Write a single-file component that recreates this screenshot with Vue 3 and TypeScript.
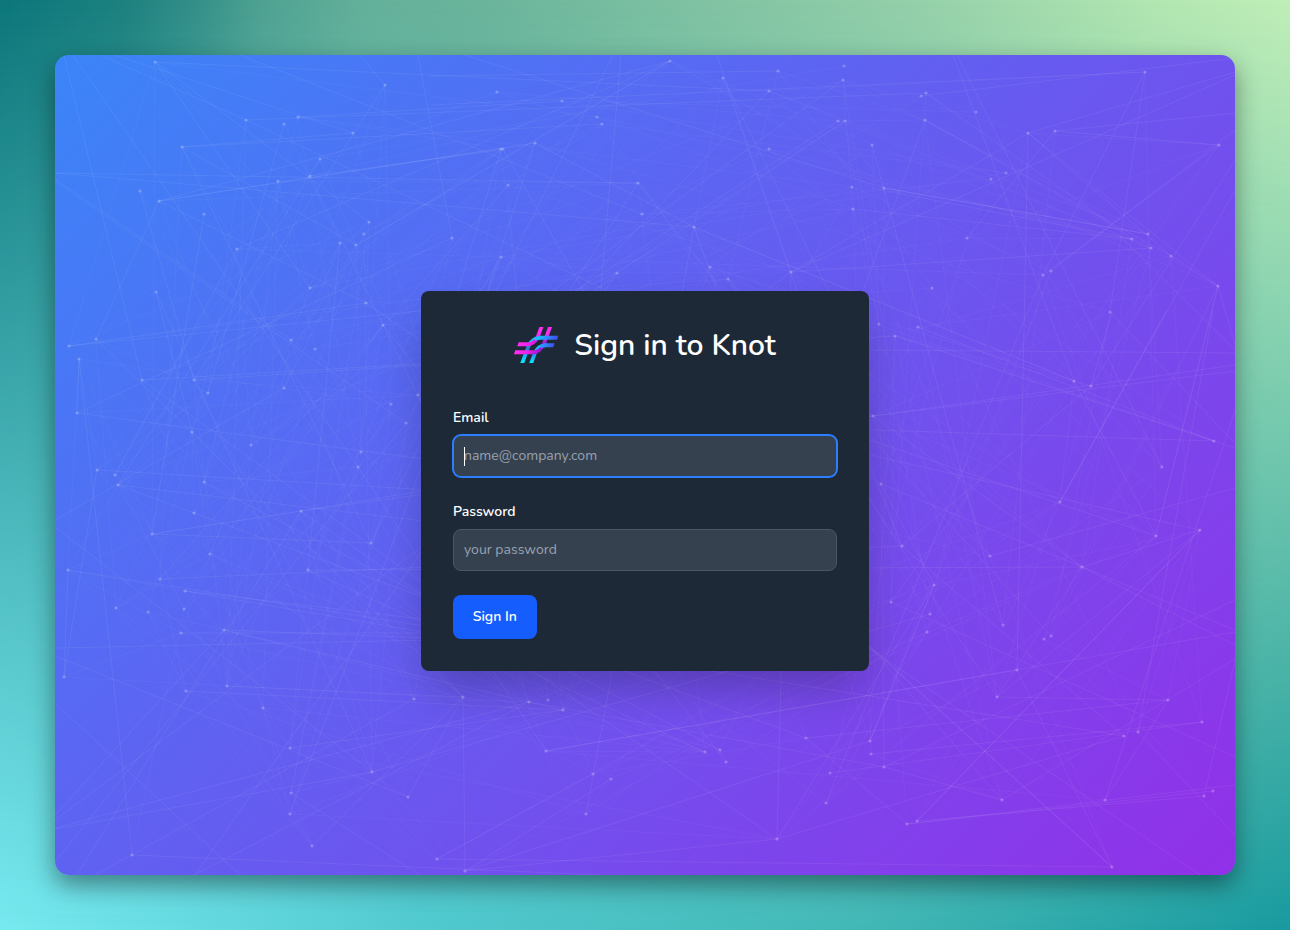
<script setup lang="ts">
import { ref } from 'vue'

type Point = [number, number]
type Segment = [number, number, number, number]

const email = ref('')
const password = ref('')

const dots: Point[] = [
  [155, 62], [385, 85], [246, 120], [298, 117], [284, 124], [353, 133], [182, 147], [320, 159], [310, 176],
  [278, 181], [140, 191], [159, 201], [204, 214], [369, 222], [364, 234], [340, 243], [356, 245], [237, 249],
  [156, 292], [310, 288], [366, 303], [497, 92], [562, 101], [597, 117], [602, 124], [501, 149], [503, 149],
  [535, 143], [508, 185], [452, 238], [501, 257], [617, 273], [638, 183], [642, 214], [694, 227], [710, 267],
  [728, 279], [791, 272], [670, 61], [723, 78], [778, 71], [769, 91], [769, 149], [844, 66], [843, 80],
  [838, 121], [845, 121], [852, 187], [853, 209], [921, 96], [926, 93], [925, 120], [976, 112], [872, 145],
  [884, 188], [1028, 133], [1055, 131], [1145, 72], [1219, 145], [991, 179], [1006, 173], [967, 238],
  [932, 288], [1051, 271], [1043, 275], [1132, 239], [1148, 234], [1151, 248], [1171, 256], [1218, 286],
  [96, 339], [69, 346], [79, 359], [142, 380], [194, 380], [208, 393], [284, 388], [291, 340], [315, 349],
  [383, 325], [77, 413], [192, 432], [251, 445], [97, 470], [115, 475], [118, 485], [204, 482], [194, 513],
  [301, 511], [152, 534], [210, 554], [68, 570], [160, 579], [185, 591], [116, 608], [148, 612], [184, 609],
  [308, 570], [371, 543], [358, 467], [361, 452], [391, 404], [406, 423], [418, 395], [879, 324], [895, 336],
  [918, 327], [873, 416], [881, 484], [902, 546], [934, 585], [891, 602], [930, 614], [990, 556], [1082, 567],
  [1156, 536], [1200, 530], [1060, 502], [1214, 441], [1162, 467], [1074, 381], [1091, 386], [1110, 312],
  [64, 677], [181, 633], [224, 630], [186, 691], [227, 686], [263, 708], [290, 748], [291, 793], [290, 814],
  [312, 846], [132, 855], [372, 772], [408, 797], [414, 699], [463, 697], [529, 702], [548, 700], [563, 710],
  [546, 751], [593, 774], [611, 779], [586, 814], [437, 859], [465, 871], [705, 752], [720, 750], [726, 762],
  [806, 738], [830, 773], [826, 803], [777, 839], [927, 632], [1003, 625], [1044, 639], [1051, 636],
  [1017, 670], [997, 697], [1168, 700], [1202, 722], [1124, 736], [1138, 732], [870, 741], [871, 754],
  [884, 767], [907, 824], [917, 821], [1002, 800], [1105, 800], [1204, 796], [1213, 791], [1112, 867],
]

const strands: Segment[] = [
  [64, 55, 120, 310], [73, 55, 330, 425], [100, 55, 246, 120], [115, 55, 430, 158], [155, 62, 430, 75],
  [155, 62, 310, 288], [155, 62, 380, 235], [55, 173, 700, 173], [55, 173, 560, 215], [55, 179, 237, 310],
  [55, 181, 420, 440], [246, 120, 925, 93], [246, 120, 560, 270], [298, 117, 620, 96], [182, 147, 353, 133],
  [182, 147, 620, 128], [182, 147, 270, 330], [182, 147, 420, 290], [159, 201, 560, 145], [159, 201, 670, 61],
  [159, 201, 96, 339], [159, 201, 366, 303], [140, 191, 170, 310], [204, 214, 173, 380], [284, 124, 237, 310],
  [385, 85, 320, 190], [385, 85, 360, 55], [240, 55, 430, 130], [418, 55, 450, 250], [320, 159, 120, 475],
  [310, 176, 430, 420], [310, 176, 500, 150], [670, 61, 430, 165], [670, 61, 250, 310], [613, 55, 540, 210],
  [621, 55, 600, 300], [717, 55, 800, 300], [723, 78, 838, 310], [769, 91, 560, 310], [838, 121, 430, 385],
  [845, 121, 600, 290], [843, 80, 430, 380], [638, 183, 500, 400], [638, 183, 730, 300], [694, 227, 725, 310],
  [694, 227, 1074, 381], [535, 143, 694, 227], [535, 143, 475, 330], [501, 149, 455, 300], [503, 149, 600, 320],
  [1235, 72, 1028, 133], [1235, 75, 940, 215], [1235, 113, 1055, 131], [1235, 130, 1000, 310],
  [1235, 160, 1074, 420], [1235, 190, 1060, 502], [1219, 145, 1055, 131], [1219, 145, 1000, 295],
  [1145, 72, 1043, 275], [1145, 72, 1110, 312], [1218, 286, 1171, 256], [1218, 286, 1190, 400],
  [1218, 286, 1235, 345], [1171, 256, 1055, 190], [1151, 248, 900, 270], [1148, 234, 872, 188],
  [1028, 133, 1027, 470], [1028, 133, 1171, 256], [1028, 133, 800, 285], [921, 96, 1235, 58],
  [872, 145, 940, 410], [953, 55, 1060, 330], [957, 55, 1120, 400], [925, 120, 860, 300], [1055, 131, 967, 238],
  [884, 188, 1091, 200], [872, 188, 1132, 239], [926, 93, 1120, 230], [1119, 235, 1235, 350],
  [69, 346, 284, 310], [69, 346, 430, 310], [96, 339, 250, 490], [79, 359, 132, 855], [79, 359, 77, 413],
  [77, 413, 620, 485], [77, 413, 220, 350], [142, 380, 420, 370], [194, 380, 500, 360], [142, 380, 460, 610],
  [55, 520, 284, 388], [55, 527, 312, 700], [118, 485, 420, 600], [118, 485, 500, 530], [115, 475, 208, 300],
  [97, 470, 430, 490], [152, 534, 420, 540], [152, 534, 300, 500], [68, 570, 64, 677], [68, 570, 250, 600],
  [64, 677, 96, 500], [301, 511, 600, 470], [301, 511, 420, 495], [185, 591, 470, 640], [185, 591, 430, 620],
  [160, 579, 420, 560], [181, 633, 430, 633], [186, 691, 500, 708], [227, 686, 470, 689], [224, 630, 480, 640],
  [55, 648, 430, 640], [55, 656, 500, 830], [55, 703, 240, 875], [55, 815, 224, 630], [55, 820, 420, 560],
  [55, 828, 440, 720], [55, 829, 500, 750], [55, 862, 250, 620], [77, 875, 310, 500], [95, 875, 430, 680],
  [132, 855, 600, 875], [195, 875, 420, 550], [194, 875, 520, 690], [290, 814, 380, 590], [291, 793, 420, 875],
  [290, 748, 620, 720], [312, 846, 480, 700], [408, 797, 470, 670], [437, 859, 590, 765], [465, 871, 453, 670],
  [465, 871, 611, 779], [465, 871, 860, 740], [465, 871, 777, 839], [437, 859, 860, 872], [777, 839, 1003, 770],
  [777, 839, 870, 690], [777, 839, 778, 670], [777, 839, 650, 752], [586, 814, 610, 670], [546, 751, 490, 670],
  [720, 750, 560, 670], [726, 762, 655, 670], [705, 752, 580, 690], [873, 416, 1235, 371], [873, 416, 1235, 365],
  [895, 336, 1235, 448], [918, 327, 1214, 441], [870, 350, 1235, 353], [873, 416, 1074, 570],
  [873, 430, 1214, 441], [1213, 310, 1156, 620], [1110, 312, 1235, 443], [1167, 310, 1060, 502],
  [1091, 386, 900, 560], [1091, 386, 1112, 312], [1074, 381, 1170, 540], [990, 556, 1235, 488],
  [902, 546, 860, 440], [881, 484, 1235, 630], [870, 440, 1156, 536], [870, 455, 1200, 530],
  [1200, 530, 1082, 567], [1200, 530, 1120, 620], [1200, 530, 980, 730], [1082, 567, 1235, 645],
  [1082, 567, 870, 569], [870, 646, 1112, 867], [872, 649, 1112, 867], [868, 645, 1002, 800],
  [1235, 632, 860, 690], [1235, 659, 1002, 800], [1235, 600, 860, 780], [1168, 700, 870, 722],
  [1168, 700, 990, 695], [1168, 700, 1105, 765], [1202, 722, 860, 755], [1017, 670, 1112, 867],
  [1017, 670, 870, 690], [1105, 800, 1235, 410], [1124, 736, 990, 620], [1138, 732, 1235, 835],
  [1204, 796, 917, 821], [1213, 791, 860, 833], [1235, 785, 907, 824], [1204, 796, 1235, 660],
  [1235, 757, 930, 625], [1200, 875, 930, 690], [907, 824, 860, 785], [917, 821, 1110, 625],
  [1002, 800, 884, 767], [870, 741, 910, 620], [465, 55, 870, 180], [430, 76, 860, 70], [430, 105, 1110, 56],
]

/** Small deterministic generator so the mesh is identical on every visit. */
function createRandom(seed: number): () => number {
  let state = seed
  return () => {
    state = (state * 1664525 + 1013904223) % 4294967296
    return state / 4294967296
  }
}

function isAnchored(x: number, y: number): boolean {
  if (x <= 55 || x >= 1235 || y <= 55 || y >= 875) return true
  if (x > 425 && x < 865 && y > 295 && y < 667) return true
  return dots.some(([dx, dy]) => Math.hypot(dx - x, dy - y) < 3)
}

/** Carries a loose strand on to the dot lying closest to its direction. */
function anchor([x1, y1, x2, y2]: Segment): Segment {
  if (isAnchored(x2, y2)) return [x1, y1, x2, y2]
  const length = Math.hypot(x2 - x1, y2 - y1)
  const ux = (x2 - x1) / length
  const uy = (y2 - y1) / length
  let best: Point = [x2, y2]
  let bestScore = Infinity
  for (const [dx, dy] of dots) {
    const along = (dx - x1) * ux + (dy - y1) * uy
    const across = Math.abs((dx - x1) * uy - (dy - y1) * ux)
    if (along < length * 0.7) continue
    const score = (across / along) * 900 + Math.abs(along - length) * 0.12
    if (score < bestScore) {
      bestScore = score
      best = [dx, dy]
    }
  }
  return [x1, y1, best[0], best[1]]
}

function buildMesh(points: Point[]): Segment[] {
  const random = createRandom(20)
  const result: Segment[] = []
  points.forEach(([x, y]) => {
    for (let i = 0; i < 4; i++) {
      const [tx, ty] = points[Math.floor(random() * points.length)]
      const length = Math.hypot(tx - x, ty - y)
      if (length > 80 && length < 600) result.push([x, y, tx, ty])
    }
  })
  return result
}

const strongLines = strands.map(anchor)
const softLines = buildMesh(dots)
</script>

<template>
  <div class="desktop">
    <main class="window">
      <svg class="mesh" viewBox="55 55 1180 820" aria-hidden="true">
        <g class="soft">
          <line v-for="(l, i) in softLines" :key="i" :x1="l[0]" :y1="l[1]" :x2="l[2]" :y2="l[3]" />
        </g>
        <g class="strong">
          <line v-for="(l, i) in strongLines" :key="i" :x1="l[0]" :y1="l[1]" :x2="l[2]" :y2="l[3]" />
        </g>
        <circle v-for="(d, i) in dots" :key="i" :cx="d[0]" :cy="d[1]" r="1.6" />
      </svg>

      <form class="card" @submit.prevent>
        <header class="heading">
          <svg class="logo" viewBox="28 36 132 108" aria-hidden="true">
            <defs>
              <linearGradient id="cyan1" gradientUnits="userSpaceOnUse" x1="73" y1="143" x2="73" y2="82">
                <stop offset="0" stop-color="#08e6ff" />
                <stop offset=".4" stop-color="#16b4f4" />
                <stop offset=".7" stop-color="#3b6fd8" />
                <stop offset="1" stop-color="#18c4fb" />
              </linearGradient>
              <linearGradient id="cyan2" gradientUnits="userSpaceOnUse" x1="100" y1="143" x2="100" y2="100">
                <stop offset="0" stop-color="#08e6ff" />
                <stop offset=".6" stop-color="#2a8fe8" />
                <stop offset="1" stop-color="#18c4fb" />
              </linearGradient>
              <linearGradient id="azure" gradientUnits="userSpaceOnUse" x1="80" y1="0" x2="150" y2="0">
                <stop offset="0" stop-color="#0fd2ff" />
                <stop offset=".55" stop-color="#2e8cff" />
                <stop offset="1" stop-color="#424cf0" />
              </linearGradient>
              <linearGradient id="pink" gradientUnits="userSpaceOnUse" x1="0" y1="36" x2="0" y2="88">
                <stop offset="0" stop-color="#ff2df5" />
                <stop offset=".45" stop-color="#f42cf0" />
                <stop offset="1" stop-color="#9a12d8" />
              </linearGradient>
              <linearGradient id="rose" gradientUnits="userSpaceOnUse" x1="38" y1="0" x2="116" y2="0">
                <stop offset="0" stop-color="#ff2df5" />
                <stop offset=".5" stop-color="#ea20e6" />
                <stop offset="1" stop-color="#9410d6" />
              </linearGradient>
            </defs>
            <g transform="matrix(1 0 -.375 1 33.75 0)" fill="none" stroke-width="12">
              <path d="M90 36V66" stroke="url(#pink)" />
              <path d="M116 36V92" stroke="url(#pink)" />
              <path d="M73 144V94Q73 68 99 68" stroke="url(#cyan1)" />
              <path d="M100 144V115Q100 91 124 91" stroke="url(#cyan2)" />
              <path d="M90 64Q90 88 66 88H39" stroke="url(#rose)" />
              <path d="M116 86Q116 112 90 112H38" stroke="url(#rose)" />
              <path d="M84 73Q90 68 99 68H151" stroke="url(#azure)" />
              <path d="M109 96Q114 91 124 91H148" stroke="url(#azure)" />
            </g>
          </svg>
          <h1>Sign in to Knot</h1>
        </header>

        <div class="field">
          <label for="email">Email</label>
          <div class="control">
            <input id="email" v-model="email" class="active" type="email" placeholder="name@company.com" />
            <span class="caret"></span>
          </div>
        </div>
        <div class="field">
          <label for="password">Password</label>
          <input id="password" v-model="password" type="password" placeholder="your password" />
        </div>
        <button type="submit">Sign In</button>
      </form>
    </main>
  </div>
</template>

<style>
body {
  margin: 0;
}
</style>

<style scoped>
.desktop {
  position: relative;
  isolation: isolate;
  box-sizing: border-box;
  height: 930px;
  padding: 55px;
  overflow: hidden;
  font-family: Nunito, Lato, "Liberation Sans", sans-serif;
  background: linear-gradient(96deg, #0c767b 0%, #1d817f 9%, #338f88 14%, #4fa292 19%, #63b09a 26%, #6cb59c 36%, #96d1aa 67%, #b2e6b1 83%, #caf4bd 100%);
}

.desktop::before {
  content: "";
  position: absolute;
  inset: 0;
  z-index: -1;
  background: linear-gradient(90deg, #77e9f0 0%, #50c9cf 33%, #42b7b6 67%, #189a9f 100%);
  mask-image: linear-gradient(180deg, transparent, #000);
}

.window {
  display: grid;
  place-items: center;
  height: 820px;
  border-radius: 14px;
  background: linear-gradient(135deg, #3b85f8, #9230e8);
  box-shadow: 0 10px 24px rgba(0, 0, 0, 0.42);
}

.mesh,
.card {
  grid-area: 1 / 1;
}

.mesh {
  display: block;
  width: 100%;
  height: 820px;
  border-radius: 14px;
}

.mesh circle {
  fill: rgba(255, 255, 255, 0.23);
}

.soft {
  stroke: rgba(255, 255, 255, 0.036);
  stroke-width: 1;
}

.strong {
  stroke: rgba(255, 255, 255, 0.068);
  stroke-width: 1;
}

.card {
  box-sizing: border-box;
  width: 448px;
  height: 380px;
  margin-top: 32px;
  padding: 32px;
  border-radius: 8px;
  background: #1e2937;
  box-shadow: 0 22px 44px -8px rgba(0, 0, 0, 0.27);
  color: #fff;
}

.heading {
  display: flex;
  align-items: center;
  justify-content: center;
  gap: 16px;
  height: 44px;
  margin-bottom: 38px;
}

.logo {
  width: 44px;
  height: 36px;
}

h1 {
  margin: 0;
  padding-top: 1px;
  font-size: 30px;
  font-weight: 600;
  line-height: 43px;
  white-space: nowrap;
}

.field {
  margin-bottom: 24px;
}

label {
  display: block;
  height: 24px;
  margin-bottom: 6px;
  font-size: 14px;
  font-weight: 600;
  line-height: 26px;
}

.field + .field label {
  height: 20px;
  margin-bottom: 8px;
  line-height: 22px;
}

.control {
  position: relative;
}

input {
  display: block;
  box-sizing: border-box;
  width: 100%;
  height: 42px;
  padding: 0 10px 2px;
  border: 1px solid #4a5565;
  border-radius: 8px;
  outline: none;
  background: #364150;
  color: #fff;
  font: 400 14px/20px Nunito, Lato, "Liberation Sans", sans-serif;
}

input::placeholder {
  color: #99a1af;
  opacity: 1;
}

input.active {
  border-color: #2b7fff;
  box-shadow: 0 0 0 1px #2b7fff;
}

.caret {
  position: absolute;
  top: 12px;
  left: 11px;
  width: 1px;
  height: 19px;
  background: #fff;
}

button {
  display: block;
  width: 83.5px;
  height: 44px;
  padding: 0;
  border: 0;
  border-radius: 8px;
  background: #155dfc;
  color: #fff;
  font: 600 14px/20px Nunito, Lato, "Liberation Sans", sans-serif;
}
</style>
